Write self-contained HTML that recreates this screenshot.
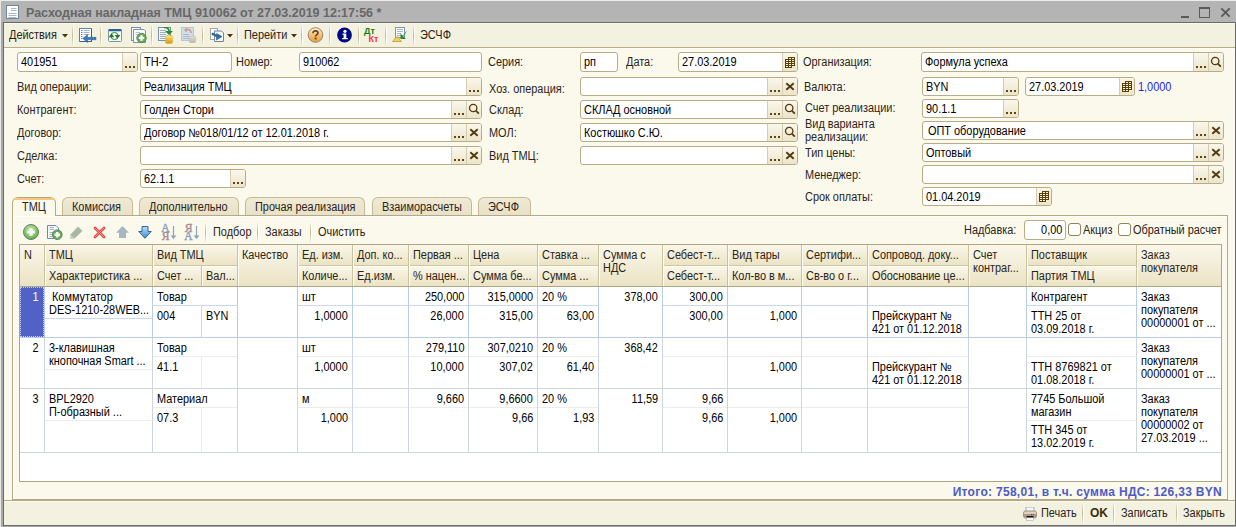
<!DOCTYPE html><html><head><meta charset="utf-8"><style>
html,body{margin:0;padding:0}
body{width:1236px;height:527px;overflow:hidden;position:relative;background:#fbf9ec;font-family:"Liberation Sans",sans-serif;font-size:11px}
div,span,svg{position:absolute}
.t{white-space:nowrap;line-height:13px;color:#2b2418;font-size:12px;transform:scaleX(0.91);transform-origin:0 0}
.r{transform-origin:100% 0}
.b{font-weight:bold}
</style></head><body>
<div style="left:0px;top:0px;width:1236px;height:23px;background:#b4b4b4"></div>
<div style="left:0px;top:0px;width:1236px;height:1px;background:#ececec"></div>
<div style="left:0px;top:0px;width:1px;height:527px;background:#e8e8e8"></div>
<div style="left:1px;top:22px;width:2px;height:505px;background:#a9a9a9"></div>
<div style="left:3px;top:22px;width:1233px;height:1px;background:#6a6a6a"></div>
<div style="left:3px;top:22px;width:1px;height:504px;background:#6a6a6a"></div>
<div style="left:1235px;top:22px;width:1px;height:504px;background:#6a6a6a"></div>
<div style="left:3px;top:525px;width:1233px;height:1px;background:#6a6a6a"></div>
<div style="left:1px;top:526px;width:1235px;height:1px;background:#a9a9a9"></div>
<svg style="left:5px;top:4px" width="15" height="16"><rect x="1.5" y="1.5" width="12" height="13" fill="#fff" stroke="#6f86a0"/><path d="M6 4.5H11.5M6 6.5H11.5M3.5 9.5H11.5M3.5 11.5H11.5M3.5 13.5H11.5" stroke="#a7b6c8" stroke-width="1"/></svg>
<span class="t" style="left:26px;top:7px;font-size:12.5px;font-weight:bold;color:#676767;transform:none">Расходная накладная ТМЦ 910062 от 27.03.2019 12:17:56 *</span>
<div style="left:1181px;top:16px;width:8px;height:2px;background:#5a5a5a"></div>
<div style="left:1199px;top:7px;width:11px;height:11px;border:1px solid #5a5a5a;border-top-width:2px;box-sizing:border-box"></div>
<svg style="left:1220px;top:7px" width="11" height="11"><path d="M1.3 1.3L9.7 9.7M9.7 1.3L1.3 9.7" stroke="#5a5a5a" stroke-width="1.9"/></svg>
<div style="left:4px;top:23px;width:1231px;height:24px;background:#f3f1df"></div>
<div style="left:4px;top:23px;width:1231px;height:1px;background:#fbfaf1"></div>
<div style="left:4px;top:47px;width:1231px;height:1px;background:#b8ae86"></div>
<div style="left:4px;top:48px;width:1231px;height:1px;background:#fffdf5"></div>
<span class="t" style="left:9px;top:29px;">Действия</span>
<svg style="left:62px;top:34px" width="6" height="4"><path d="M0 0H6L3 3.5Z" fill="#4a3810"/></svg>
<div style="left:72px;top:26px;width:1px;height:19px;background:linear-gradient(rgba(190,178,140,0.2),#c2b792 50%,rgba(190,178,140,0.2))"></div>
<div style="left:73px;top:26px;width:1px;height:19px;background:#fffef8"></div>
<svg style="left:78px;top:27px" width="19" height="17"><rect x="1.5" y="1.5" width="12" height="13" fill="#fff" stroke="#5f80a2"/><path d="M13.5 2V15M2 14.5H14" stroke="#3f5f80"/><path d="M3 3.5H4.5M3 5.5H4.5M3 7.5H4.5M3 9.5H4.5M3 11.5H4.5" stroke="#5a8ac0"/><path d="M5.5 3.5H11.5M5.5 5.5H11.5M5.5 7.5H11.5" stroke="#a8b0b8"/><path d="M18 10.3H9.5V7.5L4.8 11.5L9.5 15.5V12.7H18Z" fill="#3a7ab8" stroke="#2a5a90" stroke-width="0.5"/></svg>
<div style="left:100px;top:26px;width:1px;height:19px;background:linear-gradient(rgba(190,178,140,0.2),#c2b792 50%,rgba(190,178,140,0.2))"></div>
<div style="left:101px;top:26px;width:1px;height:19px;background:#fffef8"></div>
<svg style="left:108px;top:28px" width="15" height="15"><rect x="0.5" y="1.5" width="13" height="12" rx="1" fill="#f4f7fb" stroke="#8494a6"/><rect x="0.5" y="1" width="13" height="2.2" rx="1" fill="#2f5f8e"/><circle cx="6.5" cy="8" r="3.6" fill="none" stroke="#2a8a2a" stroke-width="1"/><path d="M0.7 9.2H6.3L3.5 5.3Z" fill="#1f7a1f"/><path d="M6.7 6.9H12.3L9.5 10.8Z" fill="#1f7a1f"/></svg>
<svg style="left:131px;top:27px" width="17" height="17"><rect x="0.5" y="0.5" width="9" height="13" fill="#f4f7fb" stroke="#7890aa"/><path d="M2.5 2.5H13L14.5 4V15.5H2.5Z" fill="#fafcfe" stroke="#7890aa"/><path d="M4.5 5.5H9M4.5 7.5H7" stroke="#b0bcc8"/><circle cx="10.5" cy="11" r="4.7" fill="#62b24e" stroke="#6a7a68"/><path d="M10.5 8.3V13.7M7.8 11H13.2" stroke="#fff" stroke-width="2.2"/></svg>
<div style="left:151px;top:26px;width:1px;height:19px;background:linear-gradient(rgba(190,178,140,0.2),#c2b792 50%,rgba(190,178,140,0.2))"></div>
<div style="left:152px;top:26px;width:1px;height:19px;background:#fffef8"></div>
<svg style="left:158px;top:27px" width="16" height="17"><rect x="0.5" y="0.5" width="12" height="13" fill="#f4f7fb" stroke="#7890aa"/><path d="M2 3.5H8M2 5.5H8M2 7.5H8M2 9.5H8M2 11.5H8" stroke="#9aacbf"/><path d="M6 0.5C9 0 11 1.5 11 4.5" stroke="#2e8a2e" stroke-width="1.8" fill="none"/><path d="M7 4H15L11 8Z" fill="#2a8a2a"/><ellipse cx="11" cy="15.2" rx="3.8" ry="1.5" fill="#d8a020"/><ellipse cx="11" cy="13.4" rx="3.8" ry="1.5" fill="#e8b830" stroke="#c89020" stroke-width="0.4"/><ellipse cx="11" cy="11.6" rx="3.8" ry="1.5" fill="#f4d050" stroke="#c89020" stroke-width="0.4"/><ellipse cx="11" cy="9.8" rx="3.8" ry="1.5" fill="#f8e070" stroke="#c89020" stroke-width="0.4"/></svg>
<svg style="left:181px;top:27px" width="16" height="17"><rect x="0.5" y="0.5" width="12" height="13" fill="#d4dee8" stroke="#b8c6d4"/><path d="M2 7.5H8M2 9.5H8M2 11.5H8" stroke="#a8bccf"/><path d="M10 6C10 3 8 2 5 3" stroke="#c8a4a4" stroke-width="2" fill="none"/><path d="M2.5 3L6 0.5V5.5Z" fill="#c8a4a4"/><ellipse cx="11.5" cy="14.5" rx="3.5" ry="1.6" fill="#c4c0b0"/><ellipse cx="11.5" cy="12.5" rx="3.5" ry="1.6" fill="#d4d0c0" stroke="#b0ac9a" stroke-width="0.4"/><ellipse cx="11.5" cy="10.5" rx="3.5" ry="1.6" fill="#dedad0" stroke="#b0ac9a" stroke-width="0.4"/></svg>
<div style="left:202px;top:26px;width:1px;height:19px;background:linear-gradient(rgba(190,178,140,0.2),#c2b792 50%,rgba(190,178,140,0.2))"></div>
<div style="left:203px;top:26px;width:1px;height:19px;background:#fffef8"></div>
<svg style="left:210px;top:28px" width="15" height="15"><rect x="0.5" y="0.5" width="7" height="11" fill="#fff" stroke="#a8a498"/><path d="M4.5 3H11.5L13.5 5V13.5H4.5Z" fill="#f6f9fc" stroke="#6a86a2"/><path d="M2 5C4 5 6 6 6.5 8V5.5L12 8.5L6.5 12V9.5C5.5 8 4 7 2 7Z" fill="#2f6ea8" stroke="#1f4a78" stroke-width="0.5"/></svg>
<svg style="left:227px;top:34px" width="6" height="4"><path d="M0 0H6L3 3.5Z" fill="#4a3810"/></svg>
<div style="left:237px;top:26px;width:1px;height:19px;background:linear-gradient(rgba(190,178,140,0.2),#c2b792 50%,rgba(190,178,140,0.2))"></div>
<div style="left:238px;top:26px;width:1px;height:19px;background:#fffef8"></div>
<span class="t" style="left:244px;top:29px;">Перейти</span>
<svg style="left:291px;top:34px" width="6" height="4"><path d="M0 0H6L3 3.5Z" fill="#4a3810"/></svg>
<div style="left:301px;top:26px;width:1px;height:19px;background:linear-gradient(rgba(190,178,140,0.2),#c2b792 50%,rgba(190,178,140,0.2))"></div>
<div style="left:302px;top:26px;width:1px;height:19px;background:#fffef8"></div>
<svg style="left:307px;top:27px" width="17" height="17"><defs><linearGradient id="og" x1="0" y1="0" x2="0" y2="1"><stop offset="0" stop-color="#fdf0d8"/><stop offset="0.6" stop-color="#f5b860"/><stop offset="1" stop-color="#eea040"/></linearGradient></defs><circle cx="8.5" cy="8" r="7.3" fill="url(#og)" stroke="#8f8678" stroke-width="1"/><path d="M6 6.2C6 4.5 7 3.8 8.5 3.8S11 4.6 11 6C11 7.6 8.6 7.8 8.6 9.6" stroke="#6a4420" stroke-width="1.7" fill="none"/><rect x="7.6" y="10.6" width="2" height="1.8" fill="#6a4420"/></svg>
<div style="left:329px;top:26px;width:1px;height:19px;background:linear-gradient(rgba(190,178,140,0.2),#c2b792 50%,rgba(190,178,140,0.2))"></div>
<div style="left:330px;top:26px;width:1px;height:19px;background:#fffef8"></div>
<svg style="left:337px;top:27px" width="16" height="16"><circle cx="7.5" cy="8" r="7.4" fill="#000a80"/><circle cx="8" cy="4.3" r="1.6" fill="#fff"/><path d="M5.5 6.5H9.3V11H10.8V12.3H5.2V11H6.6V7.8H5.5Z" fill="#fff"/></svg>
<div style="left:358px;top:26px;width:1px;height:19px;background:linear-gradient(rgba(190,178,140,0.2),#c2b792 50%,rgba(190,178,140,0.2))"></div>
<div style="left:359px;top:26px;width:1px;height:19px;background:#fffef8"></div>
<svg style="left:363px;top:27px" width="18" height="16"><text x="1" y="7.3" font-family="Liberation Sans" font-weight="bold" font-size="9" fill="#1a7a1a">Дт</text><text x="5.5" y="15" font-family="Liberation Sans" font-weight="bold" font-size="9" fill="#ff3434">Кт</text></svg>
<div style="left:385px;top:26px;width:1px;height:19px;background:linear-gradient(rgba(190,178,140,0.2),#c2b792 50%,rgba(190,178,140,0.2))"></div>
<div style="left:386px;top:26px;width:1px;height:19px;background:#fffef8"></div>
<svg style="left:392px;top:27px" width="16" height="16"><rect x="3.5" y="0.5" width="9" height="10" fill="#fafcfe" stroke="#7f98b0"/><path d="M5 2.5H11M5 4.5H11M5 6.5H9M5 8.5H9" stroke="#a8b8c8"/><path d="M14.5 3.5C14 6 13 8 11 9L14 12H8.5V6.5L10.5 8.5C12 7.5 13 6 14.5 3.5Z" fill="#2a8a28"/><path d="M0.5 14.5L5 9.5L9.5 14.5Z" fill="#f0d060" stroke="#c09a28" stroke-width="0.8"/></svg>
<div style="left:413px;top:26px;width:1px;height:19px;background:linear-gradient(rgba(190,178,140,0.2),#c2b792 50%,rgba(190,178,140,0.2))"></div>
<div style="left:414px;top:26px;width:1px;height:19px;background:#fffef8"></div>
<span class="t" style="left:420px;top:29px;">ЭСЧФ</span>
<div style="left:17px;top:52px;width:121px;height:20px;border:1px solid #b7ac86;border-radius:3px;background:#fff;box-sizing:border-box"></div>
<div style="left:122px;top:53px;width:15px;height:18px;background:linear-gradient(#faf7ec,#ece5cb);border-left:1px solid #d6cdb0;box-sizing:border-box;border-radius:0 2px 2px 0;"></div>
<div style="left:125px;top:66px;width:2px;height:2px;background:#5f460f"></div>
<div style="left:129px;top:66px;width:2px;height:2px;background:#5f460f"></div>
<div style="left:133px;top:66px;width:2px;height:2px;background:#5f460f"></div>
<span class="t" style="left:21px;top:56px;color:#000;">401951</span>
<div style="left:140px;top:52px;width:92px;height:20px;border:1px solid #b7ac86;border-radius:3px;background:#fff;box-sizing:border-box"></div>
<span class="t" style="left:144px;top:56px;color:#000;">ТН-2</span>
<span class="t" style="left:236px;top:56px;">Номер:</span>
<div style="left:299px;top:52px;width:183px;height:20px;border:1px solid #b7ac86;border-radius:3px;background:#fff;box-sizing:border-box"></div>
<span class="t" style="left:303px;top:56px;color:#000;">910062</span>
<span class="t" style="left:488px;top:56px;">Серия:</span>
<div style="left:580px;top:52px;width:38px;height:20px;border:1px solid #b7ac86;border-radius:3px;background:#fff;box-sizing:border-box"></div>
<span class="t" style="left:584px;top:56px;color:#000;">рп</span>
<span class="t" style="left:626px;top:56px;">Дата:</span>
<div style="left:678px;top:52px;width:120px;height:20px;border:1px solid #b7ac86;border-radius:3px;background:#fff;box-sizing:border-box"></div>
<div style="left:782px;top:53px;width:15px;height:18px;background:linear-gradient(#faf7ec,#ece5cb);border-left:1px solid #d6cdb0;box-sizing:border-box;border-radius:0 2px 2px 0;"></div>
<svg style="left:785px;top:57px" width="11" height="11"><path d="M3 0H10V9H7V11H0V2H3Z" fill="#5a3e08"/><rect x="4" y="1" width="2" height="1" fill="#fbf4dc"/><rect x="7" y="1" width="2" height="1" fill="#fbf4dc"/><rect x="1" y="3" width="2" height="1" fill="#fbf4dc"/><rect x="4" y="3" width="2" height="1" fill="#fbf4dc"/><rect x="7" y="3" width="2" height="1" fill="#fbf4dc"/><rect x="1" y="5" width="2" height="1" fill="#fbf4dc"/><rect x="4" y="5" width="2" height="1" fill="#fbf4dc"/><rect x="7" y="5" width="2" height="1" fill="#fbf4dc"/><rect x="1" y="7" width="2" height="1" fill="#fbf4dc"/><rect x="4" y="7" width="2" height="1" fill="#fbf4dc"/><rect x="7" y="7" width="2" height="1" fill="#fbf4dc"/><rect x="1" y="9" width="2" height="1" fill="#fbf4dc"/><rect x="4" y="9" width="2" height="1" fill="#fbf4dc"/></svg>
<span class="t" style="left:682px;top:56px;color:#000;">27.03.2019</span>
<span class="t" style="left:803px;top:56px;">Организация:</span>
<div style="left:921px;top:52px;width:303px;height:20px;border:1px solid #b7ac86;border-radius:3px;background:#fff;box-sizing:border-box"></div>
<div style="left:1208px;top:53px;width:15px;height:18px;background:linear-gradient(#faf7ec,#ece5cb);border-left:1px solid #d6cdb0;box-sizing:border-box;border-radius:0 2px 2px 0;"></div>
<svg style="left:1210px;top:56px" width="12" height="12"><circle cx="5.2" cy="5" r="3.7" fill="none" stroke="#4f3c0c" stroke-width="1.3"/><path d="M7.8 7.6L10.8 10.6" stroke="#4f3c0c" stroke-width="1.8"/></svg>
<div style="left:1193px;top:53px;width:15px;height:18px;background:linear-gradient(#faf7ec,#ece5cb);border-left:1px solid #d6cdb0;box-sizing:border-box;"></div>
<div style="left:1196px;top:66px;width:2px;height:2px;background:#5f460f"></div>
<div style="left:1200px;top:66px;width:2px;height:2px;background:#5f460f"></div>
<div style="left:1204px;top:66px;width:2px;height:2px;background:#5f460f"></div>
<span class="t" style="left:925px;top:56px;color:#000;">Формула успеха</span>
<span class="t" style="left:17px;top:81px;">Вид операции:</span>
<div style="left:140px;top:77px;width:342px;height:19px;border:1px solid #b7ac86;border-radius:3px;background:#fff;box-sizing:border-box"></div>
<div style="left:466px;top:78px;width:15px;height:17px;background:linear-gradient(#faf7ec,#ece5cb);border-left:1px solid #d6cdb0;box-sizing:border-box;border-radius:0 2px 2px 0;"></div>
<div style="left:469px;top:90px;width:2px;height:2px;background:#5f460f"></div>
<div style="left:473px;top:90px;width:2px;height:2px;background:#5f460f"></div>
<div style="left:477px;top:90px;width:2px;height:2px;background:#5f460f"></div>
<span class="t" style="left:144px;top:81px;color:#000;">Реализация ТМЦ</span>
<span class="t" style="left:17px;top:104px;">Контрагент:</span>
<div style="left:140px;top:100px;width:342px;height:19px;border:1px solid #b7ac86;border-radius:3px;background:#fff;box-sizing:border-box"></div>
<div style="left:466px;top:101px;width:15px;height:17px;background:linear-gradient(#faf7ec,#ece5cb);border-left:1px solid #d6cdb0;box-sizing:border-box;border-radius:0 2px 2px 0;"></div>
<svg style="left:468px;top:103px" width="12" height="12"><circle cx="5.2" cy="5" r="3.7" fill="none" stroke="#4f3c0c" stroke-width="1.3"/><path d="M7.8 7.6L10.8 10.6" stroke="#4f3c0c" stroke-width="1.8"/></svg>
<div style="left:451px;top:101px;width:15px;height:17px;background:linear-gradient(#faf7ec,#ece5cb);border-left:1px solid #d6cdb0;box-sizing:border-box;"></div>
<div style="left:454px;top:113px;width:2px;height:2px;background:#5f460f"></div>
<div style="left:458px;top:113px;width:2px;height:2px;background:#5f460f"></div>
<div style="left:462px;top:113px;width:2px;height:2px;background:#5f460f"></div>
<span class="t" style="left:144px;top:104px;color:#000;">Голден Стори</span>
<span class="t" style="left:17px;top:127px;">Договор:</span>
<div style="left:140px;top:123px;width:342px;height:19px;border:1px solid #b7ac86;border-radius:3px;background:#fff;box-sizing:border-box"></div>
<div style="left:466px;top:124px;width:15px;height:17px;background:linear-gradient(#faf7ec,#ece5cb);border-left:1px solid #d6cdb0;box-sizing:border-box;border-radius:0 2px 2px 0;"></div>
<svg style="left:469px;top:128px" width="10" height="9"><path d="M1.3 1.3L8.7 7.7M8.7 1.3L1.3 7.7" stroke="#4f3c0c" stroke-width="1.9"/></svg>
<div style="left:451px;top:124px;width:15px;height:17px;background:linear-gradient(#faf7ec,#ece5cb);border-left:1px solid #d6cdb0;box-sizing:border-box;"></div>
<div style="left:454px;top:136px;width:2px;height:2px;background:#5f460f"></div>
<div style="left:458px;top:136px;width:2px;height:2px;background:#5f460f"></div>
<div style="left:462px;top:136px;width:2px;height:2px;background:#5f460f"></div>
<span class="t" style="left:144px;top:127px;color:#000;">Договор №018/01/12 от 12.01.2018 г.</span>
<span class="t" style="left:17px;top:150px;">Сделка:</span>
<div style="left:140px;top:146px;width:342px;height:19px;border:1px solid #b7ac86;border-radius:3px;background:#fff;box-sizing:border-box"></div>
<div style="left:466px;top:147px;width:15px;height:17px;background:linear-gradient(#faf7ec,#ece5cb);border-left:1px solid #d6cdb0;box-sizing:border-box;border-radius:0 2px 2px 0;"></div>
<svg style="left:469px;top:151px" width="10" height="9"><path d="M1.3 1.3L8.7 7.7M8.7 1.3L1.3 7.7" stroke="#4f3c0c" stroke-width="1.9"/></svg>
<div style="left:451px;top:147px;width:15px;height:17px;background:linear-gradient(#faf7ec,#ece5cb);border-left:1px solid #d6cdb0;box-sizing:border-box;"></div>
<div style="left:454px;top:159px;width:2px;height:2px;background:#5f460f"></div>
<div style="left:458px;top:159px;width:2px;height:2px;background:#5f460f"></div>
<div style="left:462px;top:159px;width:2px;height:2px;background:#5f460f"></div>
<span class="t" style="left:17px;top:173px;">Счет:</span>
<div style="left:140px;top:169px;width:106px;height:19px;border:1px solid #b7ac86;border-radius:3px;background:#fff;box-sizing:border-box"></div>
<div style="left:230px;top:170px;width:15px;height:17px;background:linear-gradient(#faf7ec,#ece5cb);border-left:1px solid #d6cdb0;box-sizing:border-box;border-radius:0 2px 2px 0;"></div>
<div style="left:233px;top:182px;width:2px;height:2px;background:#5f460f"></div>
<div style="left:237px;top:182px;width:2px;height:2px;background:#5f460f"></div>
<div style="left:241px;top:182px;width:2px;height:2px;background:#5f460f"></div>
<span class="t" style="left:144px;top:173px;color:#000;">62.1.1</span>
<span class="t" style="left:489px;top:83px;">Хоз. операция:</span>
<div style="left:580px;top:77px;width:218px;height:19px;border:1px solid #b7ac86;border-radius:3px;background:#fff;box-sizing:border-box"></div>
<div style="left:782px;top:78px;width:15px;height:17px;background:linear-gradient(#faf7ec,#ece5cb);border-left:1px solid #d6cdb0;box-sizing:border-box;border-radius:0 2px 2px 0;"></div>
<svg style="left:785px;top:82px" width="10" height="9"><path d="M1.3 1.3L8.7 7.7M8.7 1.3L1.3 7.7" stroke="#4f3c0c" stroke-width="1.9"/></svg>
<div style="left:767px;top:78px;width:15px;height:17px;background:linear-gradient(#faf7ec,#ece5cb);border-left:1px solid #d6cdb0;box-sizing:border-box;"></div>
<div style="left:770px;top:90px;width:2px;height:2px;background:#5f460f"></div>
<div style="left:774px;top:90px;width:2px;height:2px;background:#5f460f"></div>
<div style="left:778px;top:90px;width:2px;height:2px;background:#5f460f"></div>
<span class="t" style="left:489px;top:104px;">Склад:</span>
<div style="left:580px;top:100px;width:218px;height:19px;border:1px solid #b7ac86;border-radius:3px;background:#fff;box-sizing:border-box"></div>
<div style="left:782px;top:101px;width:15px;height:17px;background:linear-gradient(#faf7ec,#ece5cb);border-left:1px solid #d6cdb0;box-sizing:border-box;border-radius:0 2px 2px 0;"></div>
<svg style="left:784px;top:103px" width="12" height="12"><circle cx="5.2" cy="5" r="3.7" fill="none" stroke="#4f3c0c" stroke-width="1.3"/><path d="M7.8 7.6L10.8 10.6" stroke="#4f3c0c" stroke-width="1.8"/></svg>
<div style="left:767px;top:101px;width:15px;height:17px;background:linear-gradient(#faf7ec,#ece5cb);border-left:1px solid #d6cdb0;box-sizing:border-box;"></div>
<div style="left:770px;top:113px;width:2px;height:2px;background:#5f460f"></div>
<div style="left:774px;top:113px;width:2px;height:2px;background:#5f460f"></div>
<div style="left:778px;top:113px;width:2px;height:2px;background:#5f460f"></div>
<span class="t" style="left:584px;top:104px;color:#000;">СКЛАД основной</span>
<span class="t" style="left:489px;top:127px;">МОЛ:</span>
<div style="left:580px;top:123px;width:218px;height:19px;border:1px solid #b7ac86;border-radius:3px;background:#fff;box-sizing:border-box"></div>
<div style="left:782px;top:124px;width:15px;height:17px;background:linear-gradient(#faf7ec,#ece5cb);border-left:1px solid #d6cdb0;box-sizing:border-box;border-radius:0 2px 2px 0;"></div>
<svg style="left:784px;top:126px" width="12" height="12"><circle cx="5.2" cy="5" r="3.7" fill="none" stroke="#4f3c0c" stroke-width="1.3"/><path d="M7.8 7.6L10.8 10.6" stroke="#4f3c0c" stroke-width="1.8"/></svg>
<div style="left:767px;top:124px;width:15px;height:17px;background:linear-gradient(#faf7ec,#ece5cb);border-left:1px solid #d6cdb0;box-sizing:border-box;"></div>
<div style="left:770px;top:136px;width:2px;height:2px;background:#5f460f"></div>
<div style="left:774px;top:136px;width:2px;height:2px;background:#5f460f"></div>
<div style="left:778px;top:136px;width:2px;height:2px;background:#5f460f"></div>
<span class="t" style="left:584px;top:127px;color:#000;">Костюшко С.Ю.</span>
<span class="t" style="left:489px;top:150px;">Вид ТМЦ:</span>
<div style="left:580px;top:146px;width:218px;height:19px;border:1px solid #b7ac86;border-radius:3px;background:#fff;box-sizing:border-box"></div>
<div style="left:782px;top:147px;width:15px;height:17px;background:linear-gradient(#faf7ec,#ece5cb);border-left:1px solid #d6cdb0;box-sizing:border-box;border-radius:0 2px 2px 0;"></div>
<svg style="left:785px;top:151px" width="10" height="9"><path d="M1.3 1.3L8.7 7.7M8.7 1.3L1.3 7.7" stroke="#4f3c0c" stroke-width="1.9"/></svg>
<div style="left:767px;top:147px;width:15px;height:17px;background:linear-gradient(#faf7ec,#ece5cb);border-left:1px solid #d6cdb0;box-sizing:border-box;"></div>
<div style="left:770px;top:159px;width:2px;height:2px;background:#5f460f"></div>
<div style="left:774px;top:159px;width:2px;height:2px;background:#5f460f"></div>
<div style="left:778px;top:159px;width:2px;height:2px;background:#5f460f"></div>
<span class="t" style="left:804px;top:81px;">Валюта:</span>
<div style="left:922px;top:77px;width:97px;height:19px;border:1px solid #b7ac86;border-radius:3px;background:#fff;box-sizing:border-box"></div>
<div style="left:1003px;top:78px;width:15px;height:17px;background:linear-gradient(#faf7ec,#ece5cb);border-left:1px solid #d6cdb0;box-sizing:border-box;border-radius:0 2px 2px 0;"></div>
<div style="left:1006px;top:90px;width:2px;height:2px;background:#5f460f"></div>
<div style="left:1010px;top:90px;width:2px;height:2px;background:#5f460f"></div>
<div style="left:1014px;top:90px;width:2px;height:2px;background:#5f460f"></div>
<span class="t" style="left:926px;top:81px;color:#000;">BYN</span>
<div style="left:1025px;top:77px;width:110px;height:19px;border:1px solid #b7ac86;border-radius:3px;background:#fff;box-sizing:border-box"></div>
<div style="left:1119px;top:78px;width:15px;height:17px;background:linear-gradient(#faf7ec,#ece5cb);border-left:1px solid #d6cdb0;box-sizing:border-box;border-radius:0 2px 2px 0;"></div>
<svg style="left:1122px;top:81px" width="11" height="11"><path d="M3 0H10V9H7V11H0V2H3Z" fill="#5a3e08"/><rect x="4" y="1" width="2" height="1" fill="#fbf4dc"/><rect x="7" y="1" width="2" height="1" fill="#fbf4dc"/><rect x="1" y="3" width="2" height="1" fill="#fbf4dc"/><rect x="4" y="3" width="2" height="1" fill="#fbf4dc"/><rect x="7" y="3" width="2" height="1" fill="#fbf4dc"/><rect x="1" y="5" width="2" height="1" fill="#fbf4dc"/><rect x="4" y="5" width="2" height="1" fill="#fbf4dc"/><rect x="7" y="5" width="2" height="1" fill="#fbf4dc"/><rect x="1" y="7" width="2" height="1" fill="#fbf4dc"/><rect x="4" y="7" width="2" height="1" fill="#fbf4dc"/><rect x="7" y="7" width="2" height="1" fill="#fbf4dc"/><rect x="1" y="9" width="2" height="1" fill="#fbf4dc"/><rect x="4" y="9" width="2" height="1" fill="#fbf4dc"/></svg>
<span class="t" style="left:1029px;top:81px;color:#000;">27.03.2019</span>
<span class="t" style="left:1138px;top:81px;color:#2424ee">1,0000</span>
<span class="t" style="left:805px;top:102px;">Счет реализации:</span>
<div style="left:922px;top:99px;width:97px;height:19px;border:1px solid #b7ac86;border-radius:3px;background:#fff;box-sizing:border-box"></div>
<div style="left:1003px;top:100px;width:15px;height:17px;background:linear-gradient(#faf7ec,#ece5cb);border-left:1px solid #d6cdb0;box-sizing:border-box;border-radius:0 2px 2px 0;"></div>
<div style="left:1006px;top:112px;width:2px;height:2px;background:#5f460f"></div>
<div style="left:1010px;top:112px;width:2px;height:2px;background:#5f460f"></div>
<div style="left:1014px;top:112px;width:2px;height:2px;background:#5f460f"></div>
<span class="t" style="left:926px;top:103px;color:#000;">90.1.1</span>
<span class="t" style="left:805px;top:118px;">Вид варианта</span>
<span class="t" style="left:805px;top:131px;">реализации:</span>
<div style="left:922px;top:121px;width:302px;height:19px;border:1px solid #b7ac86;border-radius:3px;background:#fff;box-sizing:border-box"></div>
<div style="left:1208px;top:122px;width:15px;height:17px;background:linear-gradient(#faf7ec,#ece5cb);border-left:1px solid #d6cdb0;box-sizing:border-box;border-radius:0 2px 2px 0;"></div>
<svg style="left:1211px;top:126px" width="10" height="9"><path d="M1.3 1.3L8.7 7.7M8.7 1.3L1.3 7.7" stroke="#4f3c0c" stroke-width="1.9"/></svg>
<div style="left:1193px;top:122px;width:15px;height:17px;background:linear-gradient(#faf7ec,#ece5cb);border-left:1px solid #d6cdb0;box-sizing:border-box;"></div>
<div style="left:1196px;top:134px;width:2px;height:2px;background:#5f460f"></div>
<div style="left:1200px;top:134px;width:2px;height:2px;background:#5f460f"></div>
<div style="left:1204px;top:134px;width:2px;height:2px;background:#5f460f"></div>
<span class="t" style="left:928px;top:125px;color:#000;">ОПТ оборудование</span>
<span class="t" style="left:805px;top:147px;">Тип цены:</span>
<div style="left:922px;top:143px;width:302px;height:19px;border:1px solid #b7ac86;border-radius:3px;background:#fff;box-sizing:border-box"></div>
<div style="left:1208px;top:144px;width:15px;height:17px;background:linear-gradient(#faf7ec,#ece5cb);border-left:1px solid #d6cdb0;box-sizing:border-box;border-radius:0 2px 2px 0;"></div>
<svg style="left:1211px;top:148px" width="10" height="9"><path d="M1.3 1.3L8.7 7.7M8.7 1.3L1.3 7.7" stroke="#4f3c0c" stroke-width="1.9"/></svg>
<div style="left:1193px;top:144px;width:15px;height:17px;background:linear-gradient(#faf7ec,#ece5cb);border-left:1px solid #d6cdb0;box-sizing:border-box;"></div>
<div style="left:1196px;top:156px;width:2px;height:2px;background:#5f460f"></div>
<div style="left:1200px;top:156px;width:2px;height:2px;background:#5f460f"></div>
<div style="left:1204px;top:156px;width:2px;height:2px;background:#5f460f"></div>
<span class="t" style="left:926px;top:147px;color:#000;">Оптовый</span>
<span class="t" style="left:805px;top:169px;">Менеджер:</span>
<div style="left:922px;top:165px;width:302px;height:19px;border:1px solid #b7ac86;border-radius:3px;background:#fff;box-sizing:border-box"></div>
<div style="left:1208px;top:166px;width:15px;height:17px;background:linear-gradient(#faf7ec,#ece5cb);border-left:1px solid #d6cdb0;box-sizing:border-box;border-radius:0 2px 2px 0;"></div>
<svg style="left:1211px;top:170px" width="10" height="9"><path d="M1.3 1.3L8.7 7.7M8.7 1.3L1.3 7.7" stroke="#4f3c0c" stroke-width="1.9"/></svg>
<div style="left:1193px;top:166px;width:15px;height:17px;background:linear-gradient(#faf7ec,#ece5cb);border-left:1px solid #d6cdb0;box-sizing:border-box;"></div>
<div style="left:1196px;top:178px;width:2px;height:2px;background:#5f460f"></div>
<div style="left:1200px;top:178px;width:2px;height:2px;background:#5f460f"></div>
<div style="left:1204px;top:178px;width:2px;height:2px;background:#5f460f"></div>
<span class="t" style="left:805px;top:191px;">Срок оплаты:</span>
<div style="left:922px;top:187px;width:130px;height:19px;border:1px solid #b7ac86;border-radius:3px;background:#fff;box-sizing:border-box"></div>
<div style="left:1036px;top:188px;width:15px;height:17px;background:linear-gradient(#faf7ec,#ece5cb);border-left:1px solid #d6cdb0;box-sizing:border-box;border-radius:0 2px 2px 0;"></div>
<svg style="left:1039px;top:191px" width="11" height="11"><path d="M3 0H10V9H7V11H0V2H3Z" fill="#5a3e08"/><rect x="4" y="1" width="2" height="1" fill="#fbf4dc"/><rect x="7" y="1" width="2" height="1" fill="#fbf4dc"/><rect x="1" y="3" width="2" height="1" fill="#fbf4dc"/><rect x="4" y="3" width="2" height="1" fill="#fbf4dc"/><rect x="7" y="3" width="2" height="1" fill="#fbf4dc"/><rect x="1" y="5" width="2" height="1" fill="#fbf4dc"/><rect x="4" y="5" width="2" height="1" fill="#fbf4dc"/><rect x="7" y="5" width="2" height="1" fill="#fbf4dc"/><rect x="1" y="7" width="2" height="1" fill="#fbf4dc"/><rect x="4" y="7" width="2" height="1" fill="#fbf4dc"/><rect x="7" y="7" width="2" height="1" fill="#fbf4dc"/><rect x="1" y="9" width="2" height="1" fill="#fbf4dc"/><rect x="4" y="9" width="2" height="1" fill="#fbf4dc"/></svg>
<span class="t" style="left:926px;top:191px;color:#000;">01.04.2019</span>
<div style="left:12px;top:215px;width:1216px;height:285px;border:1px solid #b3a983;box-sizing:border-box"></div>
<div style="left:13px;top:216px;width:1214px;height:283px;border-left:1px solid #fffef8;border-top:1px solid #fffef8;box-sizing:border-box"></div>
<div style="left:62px;top:197px;width:71px;height:18px;background:linear-gradient(#efead5,#e8e1c8);border:1px solid #c4ba96;border-bottom:none;border-radius:6px 6px 0 0;box-sizing:border-box"></div>
<span class="t" style="left:72px;top:201px;">Комиссия</span>
<div style="left:139px;top:197px;width:100px;height:18px;background:linear-gradient(#efead5,#e8e1c8);border:1px solid #c4ba96;border-bottom:none;border-radius:6px 6px 0 0;box-sizing:border-box"></div>
<span class="t" style="left:149px;top:201px;">Дополнительно</span>
<div style="left:245px;top:197px;width:120px;height:18px;background:linear-gradient(#efead5,#e8e1c8);border:1px solid #c4ba96;border-bottom:none;border-radius:6px 6px 0 0;box-sizing:border-box"></div>
<span class="t" style="left:255px;top:201px;">Прочая реализация</span>
<div style="left:372px;top:197px;width:100px;height:18px;background:linear-gradient(#efead5,#e8e1c8);border:1px solid #c4ba96;border-bottom:none;border-radius:6px 6px 0 0;box-sizing:border-box"></div>
<span class="t" style="left:382px;top:201px;">Взаиморасчеты</span>
<div style="left:478px;top:197px;width:53px;height:18px;background:linear-gradient(#efead5,#e8e1c8);border:1px solid #c4ba96;border-bottom:none;border-radius:6px 6px 0 0;box-sizing:border-box"></div>
<span class="t" style="left:488px;top:201px;">ЭСЧФ</span>
<div style="left:12px;top:197px;width:44px;height:19px;background:#fbf9ec;border:1px solid #b3a983;border-bottom:none;border-radius:6px 6px 0 0;box-sizing:border-box"></div>
<div style="left:13px;top:198px;width:42px;height:2px;background:#f6c77c;border-radius:5px 5px 0 0"></div>
<span class="t" style="left:22px;top:201px;">ТМЦ</span>
<svg style="left:22px;top:223px" width="18" height="18"><defs><radialGradient id="gg" cx="0.45" cy="0.35" r="0.7"><stop offset="0" stop-color="#c4e8ae"/><stop offset="0.75" stop-color="#72bc5c"/><stop offset="1" stop-color="#58a648"/></radialGradient></defs><circle cx="9" cy="9" r="7.5" fill="url(#gg)" stroke="#6c7a6a" stroke-width="1"/><path d="M9 5.2V12.8M5.2 9H12.8" stroke="#fff" stroke-width="3.2"/></svg>
<svg style="left:47px;top:225px" width="16" height="15"><path d="M0.5 0.5H9L11.5 3V13.5H0.5Z" fill="#f6f9fc" stroke="#6f8aa6"/><path d="M2.5 2.5H7M2.5 4.5H7M2.5 7.5H7M2.5 9.5H6M2.5 11.5H6" stroke="#9db0c4"/><circle cx="10.3" cy="9.7" r="4.8" fill="#62b24e" stroke="#6a7a68"/><path d="M10.3 7V12.4M7.6 9.7H13" stroke="#fff" stroke-width="2.4"/></svg>
<svg style="left:70px;top:226px" width="13" height="13"><path d="M8 0.5L12.5 5L4.5 12.5H0.5V8.5Z" fill="#a8b8a2"/><path d="M0.5 8.5L4.5 12.5H0.5Z" fill="#c8d4c4"/></svg>
<svg style="left:93px;top:226px" width="13" height="13"><path d="M2 2L11 11M11 2L2 11" stroke="#e04a44" stroke-width="2.8" stroke-linecap="round"/><path d="M2.3 2.3L10.7 10.7M10.7 2.3L2.3 10.7" stroke="#f6aaa0" stroke-width="0.8" stroke-linecap="round"/></svg>
<svg style="left:116px;top:226px" width="14" height="13"><path d="M6.5 0L13 6.8H10V11.5Q10 12 9.5 12H3.5Q3 12 3 11.5V6.8H0Z" fill="#a8b6c4"/></svg>
<svg style="left:138px;top:226px" width="14" height="13"><defs><linearGradient id="bg" x1="0" y1="0" x2="0" y2="1"><stop offset="0" stop-color="#b8e0fa"/><stop offset="1" stop-color="#3a8ad0"/></linearGradient></defs><path d="M4 0.5H10V5.5H13.3L7 12.3L0.7 5.5H4Z" fill="url(#bg)" stroke="#2a5a88" stroke-width="0.9"/></svg>
<svg style="left:161px;top:223px" width="17" height="18"><text x="0.3" y="9" font-family="Liberation Serif" font-size="11.5" fill="#88a0b8" stroke="#88a0b8" stroke-width="0.4">A</text><text x="0.8" y="17" font-family="Liberation Serif" font-size="11.5" fill="#a88a8e" stroke="#a88a8e" stroke-width="0.4">Я</text><path d="M12.5 3V15" stroke="#8aa2ba" stroke-width="1.2"/><path d="M9.5 12.5H15.5L12.5 16Z" fill="#8aa2ba"/></svg>
<svg style="left:184px;top:223px" width="17" height="18"><text x="0.8" y="9" font-family="Liberation Serif" font-size="11.5" fill="#a88a8e" stroke="#a88a8e" stroke-width="0.4">Я</text><text x="0.3" y="17" font-family="Liberation Serif" font-size="11.5" fill="#88a0b8" stroke="#88a0b8" stroke-width="0.4">A</text><path d="M12.5 3V15" stroke="#8aa2ba" stroke-width="1.2"/><path d="M9.5 12.5H15.5L12.5 16Z" fill="#8aa2ba"/></svg>
<div style="left:205px;top:223px;width:1px;height:19px;background:linear-gradient(rgba(190,178,140,0.2),#c2b792 50%,rgba(190,178,140,0.2))"></div>
<div style="left:206px;top:223px;width:1px;height:19px;background:#fffef8"></div>
<span class="t" style="left:213px;top:226px;">Подбор</span>
<div style="left:257px;top:223px;width:1px;height:19px;background:linear-gradient(rgba(190,178,140,0.2),#c2b792 50%,rgba(190,178,140,0.2))"></div>
<div style="left:258px;top:223px;width:1px;height:19px;background:#fffef8"></div>
<span class="t" style="left:265px;top:226px;">Заказы</span>
<div style="left:310px;top:223px;width:1px;height:19px;background:linear-gradient(rgba(190,178,140,0.2),#c2b792 50%,rgba(190,178,140,0.2))"></div>
<div style="left:311px;top:223px;width:1px;height:19px;background:#fffef8"></div>
<span class="t" style="left:318px;top:226px;">Очистить</span>
<span class="t" style="left:964px;top:224px;">Надбавка:</span>
<div style="left:1024px;top:220px;width:42px;height:20px;border:1px solid #b7ac86;border-radius:3px;background:#fff;box-sizing:border-box"></div>
<span class="t r" style="right:174px;top:224px;color:#000">0,00</span>
<div style="left:1068px;top:223px;width:13px;height:13px;border:1px solid #8f845f;border-radius:3px;background:#fff;box-sizing:border-box"></div>
<span class="t" style="left:1083px;top:224px;">Акциз</span>
<div style="left:1118px;top:223px;width:13px;height:13px;border:1px solid #8f845f;border-radius:3px;background:#fff;box-sizing:border-box"></div>
<span class="t" style="left:1133px;top:224px;">Обратный расчет</span>
<div style="left:19px;top:244px;width:1203px;height:238px;border:1px solid #b0a684;background:#fff;box-sizing:border-box"></div>
<div style="left:20px;top:245px;width:24px;height:41px;background:linear-gradient(#faf7ea,#ebe3c4)"></div>
<div style="left:45px;top:245px;width:107px;height:20px;background:linear-gradient(#faf7ea,#ebe3c4)"></div>
<div style="left:45px;top:266px;width:107px;height:20px;background:linear-gradient(#faf7ea,#ebe3c4)"></div>
<div style="left:153px;top:245px;width:84px;height:20px;background:linear-gradient(#faf7ea,#ebe3c4)"></div>
<div style="left:153px;top:266px;width:84px;height:20px;background:linear-gradient(#faf7ea,#ebe3c4)"></div>
<div style="left:238px;top:245px;width:59px;height:41px;background:linear-gradient(#faf7ea,#ebe3c4)"></div>
<div style="left:298px;top:245px;width:54px;height:20px;background:linear-gradient(#faf7ea,#ebe3c4)"></div>
<div style="left:298px;top:266px;width:54px;height:20px;background:linear-gradient(#faf7ea,#ebe3c4)"></div>
<div style="left:353px;top:245px;width:55px;height:20px;background:linear-gradient(#faf7ea,#ebe3c4)"></div>
<div style="left:353px;top:266px;width:55px;height:20px;background:linear-gradient(#faf7ea,#ebe3c4)"></div>
<div style="left:409px;top:245px;width:59px;height:20px;background:linear-gradient(#faf7ea,#ebe3c4)"></div>
<div style="left:409px;top:266px;width:59px;height:20px;background:linear-gradient(#faf7ea,#ebe3c4)"></div>
<div style="left:469px;top:245px;width:68px;height:20px;background:linear-gradient(#faf7ea,#ebe3c4)"></div>
<div style="left:469px;top:266px;width:68px;height:20px;background:linear-gradient(#faf7ea,#ebe3c4)"></div>
<div style="left:538px;top:245px;width:60px;height:20px;background:linear-gradient(#faf7ea,#ebe3c4)"></div>
<div style="left:538px;top:266px;width:60px;height:20px;background:linear-gradient(#faf7ea,#ebe3c4)"></div>
<div style="left:599px;top:245px;width:63px;height:41px;background:linear-gradient(#faf7ea,#ebe3c4)"></div>
<div style="left:663px;top:245px;width:64px;height:20px;background:linear-gradient(#faf7ea,#ebe3c4)"></div>
<div style="left:663px;top:266px;width:64px;height:20px;background:linear-gradient(#faf7ea,#ebe3c4)"></div>
<div style="left:728px;top:245px;width:73px;height:20px;background:linear-gradient(#faf7ea,#ebe3c4)"></div>
<div style="left:728px;top:266px;width:73px;height:20px;background:linear-gradient(#faf7ea,#ebe3c4)"></div>
<div style="left:802px;top:245px;width:65px;height:20px;background:linear-gradient(#faf7ea,#ebe3c4)"></div>
<div style="left:802px;top:266px;width:65px;height:20px;background:linear-gradient(#faf7ea,#ebe3c4)"></div>
<div style="left:868px;top:245px;width:100px;height:20px;background:linear-gradient(#faf7ea,#ebe3c4)"></div>
<div style="left:868px;top:266px;width:100px;height:20px;background:linear-gradient(#faf7ea,#ebe3c4)"></div>
<div style="left:969px;top:245px;width:57px;height:41px;background:linear-gradient(#faf7ea,#ebe3c4)"></div>
<div style="left:1027px;top:245px;width:109px;height:20px;background:linear-gradient(#faf7ea,#ebe3c4)"></div>
<div style="left:1027px;top:266px;width:109px;height:20px;background:linear-gradient(#faf7ea,#ebe3c4)"></div>
<div style="left:1137px;top:245px;width:84px;height:41px;background:linear-gradient(#faf7ea,#ebe3c4)"></div>
<div style="left:45px;top:265px;width:107px;height:1px;background:#cfc5a1"></div>
<div style="left:45px;top:266px;width:107px;height:1px;background:#fffdf4"></div>
<div style="left:153px;top:265px;width:84px;height:1px;background:#cfc5a1"></div>
<div style="left:153px;top:266px;width:84px;height:1px;background:#fffdf4"></div>
<div style="left:298px;top:265px;width:54px;height:1px;background:#cfc5a1"></div>
<div style="left:298px;top:266px;width:54px;height:1px;background:#fffdf4"></div>
<div style="left:353px;top:265px;width:55px;height:1px;background:#cfc5a1"></div>
<div style="left:353px;top:266px;width:55px;height:1px;background:#fffdf4"></div>
<div style="left:409px;top:265px;width:59px;height:1px;background:#cfc5a1"></div>
<div style="left:409px;top:266px;width:59px;height:1px;background:#fffdf4"></div>
<div style="left:469px;top:265px;width:68px;height:1px;background:#cfc5a1"></div>
<div style="left:469px;top:266px;width:68px;height:1px;background:#fffdf4"></div>
<div style="left:538px;top:265px;width:60px;height:1px;background:#cfc5a1"></div>
<div style="left:538px;top:266px;width:60px;height:1px;background:#fffdf4"></div>
<div style="left:663px;top:265px;width:64px;height:1px;background:#cfc5a1"></div>
<div style="left:663px;top:266px;width:64px;height:1px;background:#fffdf4"></div>
<div style="left:728px;top:265px;width:73px;height:1px;background:#cfc5a1"></div>
<div style="left:728px;top:266px;width:73px;height:1px;background:#fffdf4"></div>
<div style="left:802px;top:265px;width:65px;height:1px;background:#cfc5a1"></div>
<div style="left:802px;top:266px;width:65px;height:1px;background:#fffdf4"></div>
<div style="left:868px;top:265px;width:100px;height:1px;background:#cfc5a1"></div>
<div style="left:868px;top:266px;width:100px;height:1px;background:#fffdf4"></div>
<div style="left:1027px;top:265px;width:109px;height:1px;background:#cfc5a1"></div>
<div style="left:1027px;top:266px;width:109px;height:1px;background:#fffdf4"></div>
<div style="left:19px;top:286px;width:1203px;height:1px;background:#b0a684"></div>
<div style="left:44px;top:245px;width:1px;height:41px;background:#cbc19c"></div>
<div style="left:45px;top:245px;width:1px;height:41px;background:#fffef6"></div>
<div style="left:152px;top:245px;width:1px;height:41px;background:#cbc19c"></div>
<div style="left:153px;top:245px;width:1px;height:41px;background:#fffef6"></div>
<div style="left:237px;top:245px;width:1px;height:41px;background:#cbc19c"></div>
<div style="left:238px;top:245px;width:1px;height:41px;background:#fffef6"></div>
<div style="left:297px;top:245px;width:1px;height:41px;background:#cbc19c"></div>
<div style="left:298px;top:245px;width:1px;height:41px;background:#fffef6"></div>
<div style="left:352px;top:245px;width:1px;height:41px;background:#cbc19c"></div>
<div style="left:353px;top:245px;width:1px;height:41px;background:#fffef6"></div>
<div style="left:408px;top:245px;width:1px;height:41px;background:#cbc19c"></div>
<div style="left:409px;top:245px;width:1px;height:41px;background:#fffef6"></div>
<div style="left:468px;top:245px;width:1px;height:41px;background:#cbc19c"></div>
<div style="left:469px;top:245px;width:1px;height:41px;background:#fffef6"></div>
<div style="left:537px;top:245px;width:1px;height:41px;background:#cbc19c"></div>
<div style="left:538px;top:245px;width:1px;height:41px;background:#fffef6"></div>
<div style="left:598px;top:245px;width:1px;height:41px;background:#cbc19c"></div>
<div style="left:599px;top:245px;width:1px;height:41px;background:#fffef6"></div>
<div style="left:662px;top:245px;width:1px;height:41px;background:#cbc19c"></div>
<div style="left:663px;top:245px;width:1px;height:41px;background:#fffef6"></div>
<div style="left:727px;top:245px;width:1px;height:41px;background:#cbc19c"></div>
<div style="left:728px;top:245px;width:1px;height:41px;background:#fffef6"></div>
<div style="left:801px;top:245px;width:1px;height:41px;background:#cbc19c"></div>
<div style="left:802px;top:245px;width:1px;height:41px;background:#fffef6"></div>
<div style="left:867px;top:245px;width:1px;height:41px;background:#cbc19c"></div>
<div style="left:868px;top:245px;width:1px;height:41px;background:#fffef6"></div>
<div style="left:968px;top:245px;width:1px;height:41px;background:#cbc19c"></div>
<div style="left:969px;top:245px;width:1px;height:41px;background:#fffef6"></div>
<div style="left:1026px;top:245px;width:1px;height:41px;background:#cbc19c"></div>
<div style="left:1027px;top:245px;width:1px;height:41px;background:#fffef6"></div>
<div style="left:1136px;top:245px;width:1px;height:41px;background:#cbc19c"></div>
<div style="left:1137px;top:245px;width:1px;height:41px;background:#fffef6"></div>
<div style="left:201px;top:265px;width:1px;height:21px;background:#cbc19c"></div>
<div style="left:202px;top:266px;width:1px;height:20px;background:#fffef6"></div>
<span class="t" style="left:24px;top:249px;">N</span>
<span class="t" style="left:49px;top:249px;">ТМЦ</span>
<span class="t" style="left:49px;top:270px;">Характеристика ...</span>
<span class="t" style="left:157px;top:249px;">Вид ТМЦ</span>
<span class="t" style="left:157px;top:270px;">Счет ...</span>
<span class="t" style="left:242px;top:249px;">Качество</span>
<span class="t" style="left:302px;top:249px;">Ед. изм.</span>
<span class="t" style="left:302px;top:270px;">Количе...</span>
<span class="t" style="left:357px;top:249px;">Доп. ко...</span>
<span class="t" style="left:357px;top:270px;">Ед.изм.</span>
<span class="t" style="left:413px;top:249px;">Первая ...</span>
<span class="t" style="left:413px;top:270px;">% нацен...</span>
<span class="t" style="left:473px;top:249px;">Цена</span>
<span class="t" style="left:473px;top:270px;">Сумма бе...</span>
<span class="t" style="left:542px;top:249px;">Ставка ...</span>
<span class="t" style="left:542px;top:270px;">Сумма ...</span>
<span class="t" style="left:603px;top:249px;">Сумма с</span>
<span class="t" style="left:603px;top:262px;">НДС</span>
<span class="t" style="left:667px;top:249px;">Себест-т...</span>
<span class="t" style="left:667px;top:270px;">Себест-т...</span>
<span class="t" style="left:732px;top:249px;">Вид тары</span>
<span class="t" style="left:732px;top:270px;">Кол-во в м...</span>
<span class="t" style="left:806px;top:249px;">Сертифи...</span>
<span class="t" style="left:806px;top:270px;">Св-во о г...</span>
<span class="t" style="left:872px;top:249px;">Сопровод. доку...</span>
<span class="t" style="left:872px;top:270px;">Обоснование це...</span>
<span class="t" style="left:973px;top:249px;">Счет</span>
<span class="t" style="left:973px;top:262px;">контраг...</span>
<span class="t" style="left:1031px;top:249px;">Поставщик</span>
<span class="t" style="left:1031px;top:270px;">Партия ТМЦ</span>
<span class="t" style="left:1141px;top:249px;">Заказ</span>
<span class="t" style="left:1141px;top:262px;">покупателя</span>
<span class="t" style="left:206px;top:270px;">Вал...</span>
<div style="left:20px;top:337px;width:1201px;height:1px;background:#b9cce6"></div>
<div style="left:44px;top:287px;width:1px;height:50px;background:#b9cce6"></div>
<div style="left:152px;top:287px;width:1px;height:50px;background:#b9cce6"></div>
<div style="left:237px;top:287px;width:1px;height:50px;background:#b9cce6"></div>
<div style="left:297px;top:287px;width:1px;height:50px;background:#b9cce6"></div>
<div style="left:352px;top:287px;width:1px;height:50px;background:#b9cce6"></div>
<div style="left:408px;top:287px;width:1px;height:50px;background:#b9cce6"></div>
<div style="left:468px;top:287px;width:1px;height:50px;background:#b9cce6"></div>
<div style="left:537px;top:287px;width:1px;height:50px;background:#b9cce6"></div>
<div style="left:598px;top:287px;width:1px;height:50px;background:#b9cce6"></div>
<div style="left:662px;top:287px;width:1px;height:50px;background:#b9cce6"></div>
<div style="left:727px;top:287px;width:1px;height:50px;background:#b9cce6"></div>
<div style="left:801px;top:287px;width:1px;height:50px;background:#b9cce6"></div>
<div style="left:867px;top:287px;width:1px;height:50px;background:#b9cce6"></div>
<div style="left:968px;top:287px;width:1px;height:50px;background:#b9cce6"></div>
<div style="left:1026px;top:287px;width:1px;height:50px;background:#b9cce6"></div>
<div style="left:1136px;top:287px;width:1px;height:50px;background:#b9cce6"></div>
<div style="left:45px;top:318px;width:107px;height:1px;background:#c9d8ef"></div>
<div style="left:153px;top:305px;width:84px;height:1px;background:#c9d8ef"></div>
<div style="left:298px;top:305px;width:54px;height:1px;background:#c9d8ef"></div>
<div style="left:353px;top:305px;width:55px;height:1px;background:#c9d8ef"></div>
<div style="left:409px;top:305px;width:59px;height:1px;background:#c9d8ef"></div>
<div style="left:469px;top:305px;width:68px;height:1px;background:#c9d8ef"></div>
<div style="left:538px;top:305px;width:60px;height:1px;background:#c9d8ef"></div>
<div style="left:663px;top:305px;width:64px;height:1px;background:#c9d8ef"></div>
<div style="left:728px;top:305px;width:73px;height:1px;background:#c9d8ef"></div>
<div style="left:802px;top:305px;width:65px;height:1px;background:#c9d8ef"></div>
<div style="left:868px;top:305px;width:100px;height:1px;background:#c9d8ef"></div>
<div style="left:1027px;top:305px;width:109px;height:1px;background:#c9d8ef"></div>
<div style="left:201px;top:306px;width:1px;height:31px;background:#c9d8ef"></div>
<div style="left:20px;top:388px;width:1201px;height:1px;background:#cfd5dc"></div>
<div style="left:44px;top:338px;width:1px;height:50px;background:#cfd5dc"></div>
<div style="left:152px;top:338px;width:1px;height:50px;background:#cfd5dc"></div>
<div style="left:237px;top:338px;width:1px;height:50px;background:#cfd5dc"></div>
<div style="left:297px;top:338px;width:1px;height:50px;background:#cfd5dc"></div>
<div style="left:352px;top:338px;width:1px;height:50px;background:#cfd5dc"></div>
<div style="left:408px;top:338px;width:1px;height:50px;background:#cfd5dc"></div>
<div style="left:468px;top:338px;width:1px;height:50px;background:#cfd5dc"></div>
<div style="left:537px;top:338px;width:1px;height:50px;background:#cfd5dc"></div>
<div style="left:598px;top:338px;width:1px;height:50px;background:#cfd5dc"></div>
<div style="left:662px;top:338px;width:1px;height:50px;background:#cfd5dc"></div>
<div style="left:727px;top:338px;width:1px;height:50px;background:#cfd5dc"></div>
<div style="left:801px;top:338px;width:1px;height:50px;background:#cfd5dc"></div>
<div style="left:867px;top:338px;width:1px;height:50px;background:#cfd5dc"></div>
<div style="left:968px;top:338px;width:1px;height:50px;background:#cfd5dc"></div>
<div style="left:1026px;top:338px;width:1px;height:50px;background:#cfd5dc"></div>
<div style="left:1136px;top:338px;width:1px;height:50px;background:#cfd5dc"></div>
<div style="left:45px;top:369px;width:107px;height:1px;background:#ececec"></div>
<div style="left:153px;top:356px;width:84px;height:1px;background:#ececec"></div>
<div style="left:298px;top:356px;width:54px;height:1px;background:#ececec"></div>
<div style="left:353px;top:356px;width:55px;height:1px;background:#ececec"></div>
<div style="left:409px;top:356px;width:59px;height:1px;background:#ececec"></div>
<div style="left:469px;top:356px;width:68px;height:1px;background:#ececec"></div>
<div style="left:538px;top:356px;width:60px;height:1px;background:#ececec"></div>
<div style="left:663px;top:356px;width:64px;height:1px;background:#ececec"></div>
<div style="left:728px;top:356px;width:73px;height:1px;background:#ececec"></div>
<div style="left:802px;top:356px;width:65px;height:1px;background:#ececec"></div>
<div style="left:868px;top:356px;width:100px;height:1px;background:#ececec"></div>
<div style="left:1027px;top:356px;width:109px;height:1px;background:#ececec"></div>
<div style="left:201px;top:357px;width:1px;height:31px;background:#ececec"></div>
<div style="left:20px;top:452px;width:1201px;height:1px;background:#cfd5dc"></div>
<div style="left:44px;top:389px;width:1px;height:63px;background:#cfd5dc"></div>
<div style="left:152px;top:389px;width:1px;height:63px;background:#cfd5dc"></div>
<div style="left:237px;top:389px;width:1px;height:63px;background:#cfd5dc"></div>
<div style="left:297px;top:389px;width:1px;height:63px;background:#cfd5dc"></div>
<div style="left:352px;top:389px;width:1px;height:63px;background:#cfd5dc"></div>
<div style="left:408px;top:389px;width:1px;height:63px;background:#cfd5dc"></div>
<div style="left:468px;top:389px;width:1px;height:63px;background:#cfd5dc"></div>
<div style="left:537px;top:389px;width:1px;height:63px;background:#cfd5dc"></div>
<div style="left:598px;top:389px;width:1px;height:63px;background:#cfd5dc"></div>
<div style="left:662px;top:389px;width:1px;height:63px;background:#cfd5dc"></div>
<div style="left:727px;top:389px;width:1px;height:63px;background:#cfd5dc"></div>
<div style="left:801px;top:389px;width:1px;height:63px;background:#cfd5dc"></div>
<div style="left:867px;top:389px;width:1px;height:63px;background:#cfd5dc"></div>
<div style="left:968px;top:389px;width:1px;height:63px;background:#cfd5dc"></div>
<div style="left:1026px;top:389px;width:1px;height:63px;background:#cfd5dc"></div>
<div style="left:1136px;top:389px;width:1px;height:63px;background:#cfd5dc"></div>
<div style="left:45px;top:420px;width:107px;height:1px;background:#ececec"></div>
<div style="left:153px;top:407px;width:84px;height:1px;background:#ececec"></div>
<div style="left:298px;top:407px;width:54px;height:1px;background:#ececec"></div>
<div style="left:353px;top:407px;width:55px;height:1px;background:#ececec"></div>
<div style="left:409px;top:407px;width:59px;height:1px;background:#ececec"></div>
<div style="left:469px;top:407px;width:68px;height:1px;background:#ececec"></div>
<div style="left:538px;top:407px;width:60px;height:1px;background:#ececec"></div>
<div style="left:663px;top:407px;width:64px;height:1px;background:#ececec"></div>
<div style="left:728px;top:407px;width:73px;height:1px;background:#ececec"></div>
<div style="left:802px;top:407px;width:65px;height:1px;background:#ececec"></div>
<div style="left:868px;top:407px;width:100px;height:1px;background:#ececec"></div>
<div style="left:1027px;top:420px;width:109px;height:1px;background:#ececec"></div>
<div style="left:201px;top:408px;width:1px;height:44px;background:#ececec"></div>
<div style="left:20px;top:287px;width:24px;height:50px;background:#5062c5;outline:1px dotted #c8d0f0;outline-offset:-1px"></div>
<span class="t r" style="right:1197px;top:291px;color:#fff">1</span>
<span class="t" style="left:52px;top:291px;color:#000">Коммутатор</span>
<span class="t" style="left:49px;top:304px;color:#000">DES-1210-28WEB...</span>
<span class="t" style="left:157px;top:291px;color:#000">Товар</span>
<span class="t" style="left:157px;top:310px;color:#000">004</span>
<span class="t" style="left:206px;top:310px;color:#000">BYN</span>
<span class="t" style="left:302px;top:291px;color:#000">шт</span>
<span class="t r" style="right:888px;top:310px;color:#000">1,0000</span>
<span class="t r" style="right:772px;top:291px;color:#000">250,000</span>
<span class="t r" style="right:772px;top:310px;color:#000">26,000</span>
<span class="t r" style="right:703px;top:291px;color:#000">315,0000</span>
<span class="t r" style="right:703px;top:310px;color:#000">315,00</span>
<span class="t" style="left:542px;top:291px;color:#000">20 %</span>
<span class="t r" style="right:642px;top:310px;color:#000">63,00</span>
<span class="t r" style="right:578px;top:291px;color:#000">378,00</span>
<span class="t r" style="right:513px;top:291px;color:#000">300,00</span>
<span class="t r" style="right:513px;top:310px;color:#000">300,00</span>
<span class="t r" style="right:439px;top:310px;color:#000">1,000</span>
<span class="t" style="left:872px;top:310px;color:#000">Прейскурант №</span>
<span class="t" style="left:872px;top:323px;color:#000">421 от 01.12.2018</span>
<span class="t" style="left:1031px;top:291px;color:#000">Контрагент</span>
<span class="t" style="left:1031px;top:310px;color:#000">ТТН 25 от</span>
<span class="t" style="left:1031px;top:323px;color:#000">03.09.2018 г.</span>
<span class="t" style="left:1141px;top:291px;color:#000">Заказ</span>
<span class="t" style="left:1141px;top:304px;color:#000">покупателя</span>
<span class="t" style="left:1141px;top:317px;color:#000">00000001 от ...</span>
<span class="t r" style="right:1197px;top:342px;color:#000">2</span>
<span class="t" style="left:49px;top:342px;color:#000">3-клавишная</span>
<span class="t" style="left:49px;top:355px;color:#000">кнопочная Smart ...</span>
<span class="t" style="left:157px;top:342px;color:#000">Товар</span>
<span class="t" style="left:157px;top:361px;color:#000">41.1</span>
<span class="t" style="left:302px;top:342px;color:#000">шт</span>
<span class="t r" style="right:888px;top:361px;color:#000">1,0000</span>
<span class="t r" style="right:772px;top:342px;color:#000">279,110</span>
<span class="t r" style="right:772px;top:361px;color:#000">10,000</span>
<span class="t r" style="right:703px;top:342px;color:#000">307,0210</span>
<span class="t r" style="right:703px;top:361px;color:#000">307,02</span>
<span class="t" style="left:542px;top:342px;color:#000">20 %</span>
<span class="t r" style="right:642px;top:361px;color:#000">61,40</span>
<span class="t r" style="right:578px;top:342px;color:#000">368,42</span>
<span class="t r" style="right:439px;top:361px;color:#000">1,000</span>
<span class="t" style="left:872px;top:361px;color:#000">Прейскурант №</span>
<span class="t" style="left:872px;top:374px;color:#000">421 от 01.12.2018</span>
<span class="t" style="left:1031px;top:361px;color:#000">ТТН 8769821 от</span>
<span class="t" style="left:1031px;top:374px;color:#000">01.08.2018 г.</span>
<span class="t" style="left:1141px;top:342px;color:#000">Заказ</span>
<span class="t" style="left:1141px;top:355px;color:#000">покупателя</span>
<span class="t" style="left:1141px;top:368px;color:#000">00000001 от ...</span>
<span class="t r" style="right:1197px;top:393px;color:#000">3</span>
<span class="t" style="left:49px;top:393px;color:#000">BPL2920</span>
<span class="t" style="left:49px;top:406px;color:#000">П-образный ...</span>
<span class="t" style="left:157px;top:393px;color:#000">Материал</span>
<span class="t" style="left:157px;top:412px;color:#000">07.3</span>
<span class="t" style="left:302px;top:393px;color:#000">м</span>
<span class="t r" style="right:888px;top:412px;color:#000">1,000</span>
<span class="t r" style="right:772px;top:393px;color:#000">9,660</span>
<span class="t r" style="right:703px;top:393px;color:#000">9,6600</span>
<span class="t r" style="right:703px;top:412px;color:#000">9,66</span>
<span class="t" style="left:542px;top:393px;color:#000">20 %</span>
<span class="t r" style="right:642px;top:412px;color:#000">1,93</span>
<span class="t r" style="right:578px;top:393px;color:#000">11,59</span>
<span class="t r" style="right:513px;top:393px;color:#000">9,66</span>
<span class="t r" style="right:513px;top:412px;color:#000">9,66</span>
<span class="t r" style="right:439px;top:412px;color:#000">1,000</span>
<span class="t" style="left:1031px;top:393px;color:#000">7745 Большой</span>
<span class="t" style="left:1031px;top:406px;color:#000">магазин</span>
<span class="t" style="left:1031px;top:424px;color:#000">ТТН 345 от</span>
<span class="t" style="left:1031px;top:437px;color:#000">13.02.2019 г.</span>
<span class="t" style="left:1141px;top:393px;color:#000">Заказ</span>
<span class="t" style="left:1141px;top:406px;color:#000">покупателя</span>
<span class="t" style="left:1141px;top:419px;color:#000">00000002 от</span>
<span class="t" style="left:1141px;top:432px;color:#000">27.03.2019 ...</span>
<span class="t r" style="right:14px;top:486px;font-size:12px;font-weight:bold;letter-spacing:0.3px;color:#4b5bc6;transform:none">Итого: 758,01, в т.ч. сумма НДС: 126,33 BYN</span>
<div style="left:4px;top:500px;width:1231px;height:25px;background:#f3f1df"></div>
<div style="left:4px;top:500px;width:1231px;height:1px;background:#b3a983"></div>
<div style="left:4px;top:501px;width:1231px;height:1px;background:#fdfcf4"></div>
<svg style="left:1023px;top:507px" width="15" height="14"><rect x="3" y="0" width="8" height="5" fill="#f4f6f8" stroke="#9aa0a8" stroke-width="0.8"/><rect x="0.5" y="4" width="13" height="7" rx="2" fill="#d8d4cc" stroke="#8a8070" stroke-width="0.8"/><rect x="1" y="7" width="12" height="3.5" fill="#b89880"/><circle cx="8.5" cy="7.5" r="0.8" fill="#e02020"/><circle cx="10.5" cy="7.5" r="0.8" fill="#20a020"/><rect x="3.5" y="9" width="7" height="1.8" fill="#101010"/><rect x="3.5" y="10.8" width="7" height="2.5" fill="#fff" stroke="#a0a0a0" stroke-width="0.5"/></svg>
<span class="t" style="left:1041px;top:507px;">Печать</span>
<div style="left:1082px;top:504px;width:1px;height:19px;background:linear-gradient(rgba(190,178,140,0.2),#c2b792 50%,rgba(190,178,140,0.2))"></div>
<div style="left:1083px;top:504px;width:1px;height:19px;background:#fffef8"></div>
<span class="t" style="left:1090px;top:507px;font-weight:bold;font-size:12px;transform:none;color:#3c2a0a">OK</span>
<div style="left:1113px;top:504px;width:1px;height:19px;background:linear-gradient(rgba(190,178,140,0.2),#c2b792 50%,rgba(190,178,140,0.2))"></div>
<div style="left:1114px;top:504px;width:1px;height:19px;background:#fffef8"></div>
<span class="t" style="left:1121px;top:507px;">Записать</span>
<div style="left:1176px;top:504px;width:1px;height:19px;background:linear-gradient(rgba(190,178,140,0.2),#c2b792 50%,rgba(190,178,140,0.2))"></div>
<div style="left:1177px;top:504px;width:1px;height:19px;background:#fffef8"></div>
<span class="t" style="left:1183px;top:507px;">Закрыть</span>
</body></html>
